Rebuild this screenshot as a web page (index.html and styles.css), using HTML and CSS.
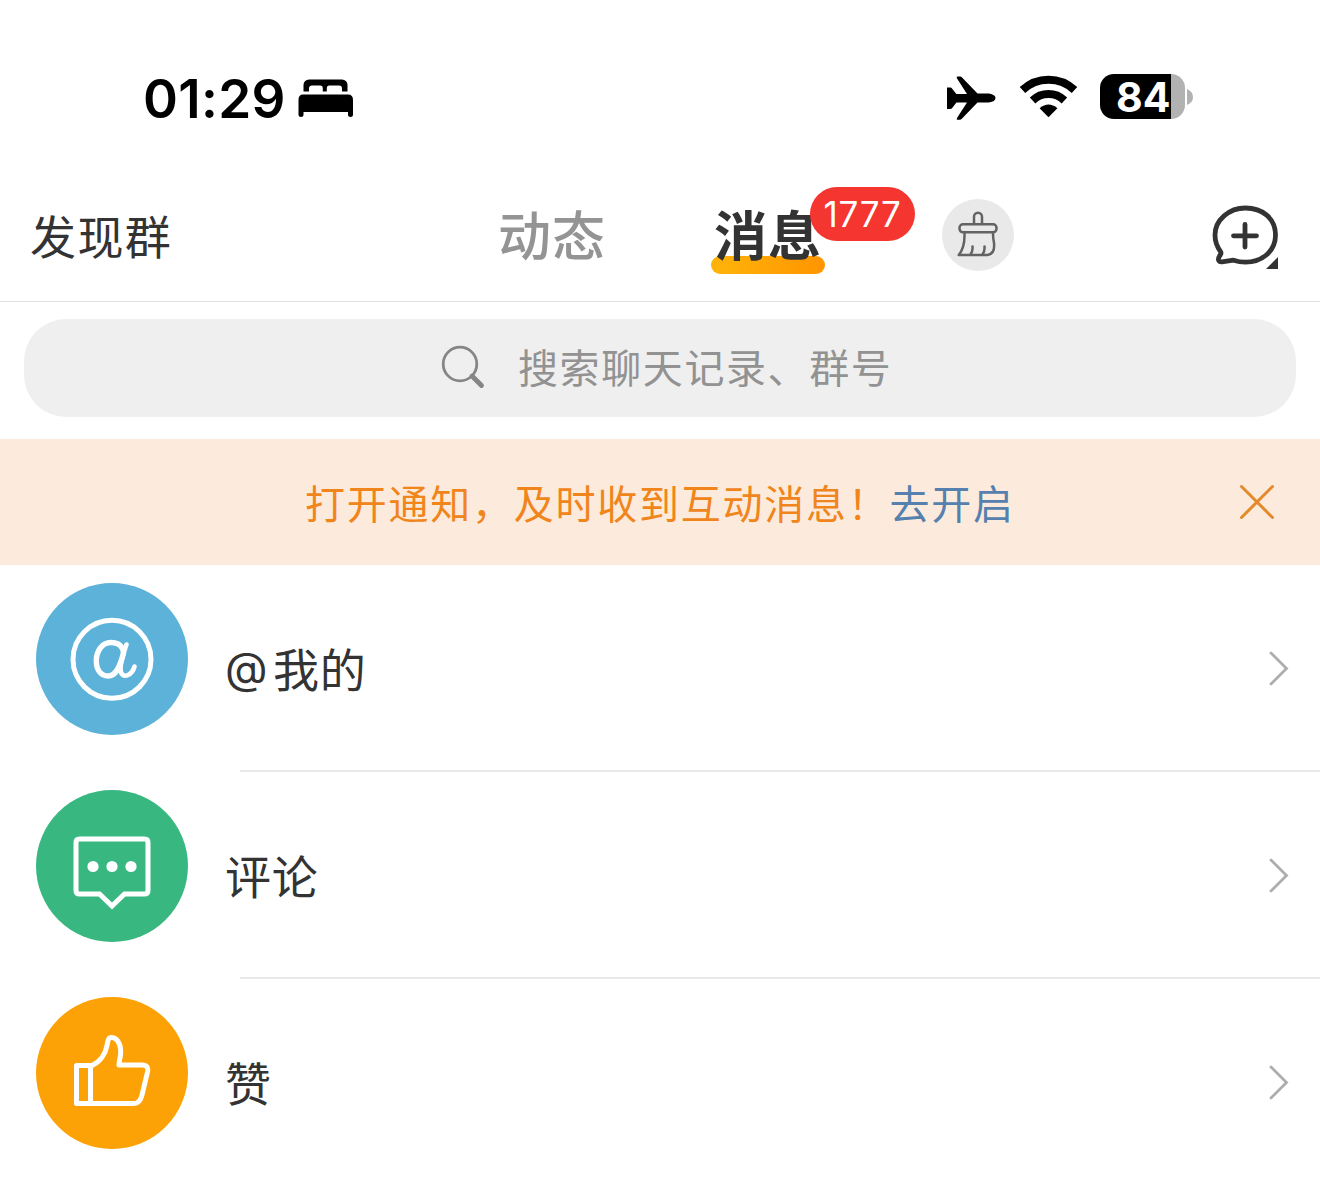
FILE: index.html
```html
<!DOCTYPE html>
<html lang="zh-CN">
<head>
<meta charset="utf-8">
<title>消息</title>
<link rel="stylesheet" href="styles.css">
</head>
<body>
<div class="screen">
  <div class="status">
    <div class="status-left">
      <span class="clock">01:29</span>
      <svg class="bed" width="56" height="40" viewBox="0 0 56 40">
        <path d="M5.500 12.500V6a5.500 5.500 0 0 1 5.500-5.500h33A5.500 5.500 0 0 1 49.500 6v6.500h-5.500V9.500q0-3-3-3H31q-2.200 0-2.200 2.500v3.500h-4V9q0-2.500-2.200-2.500H14q-3 0-3 3v3z"/>
        <path d="M5 15.500h45q5 0 5 5.500v15q0 2-2.500 2T50 36v-3H5.500v3q0 2-2.500 2T0.500 36V21q0-5.500 4.500-5.500z"/>
      </svg>
    </div>
    <div class="status-right">
      <svg class="plane" width="50" height="46" viewBox="0 0 50 46">
        <path d="M1 12.500h3.200q1.200 0 2 1.200l4.200 5.300H21L11.200 3.800Q10 1.500 11.500 1.500h2.600q1.200 0 2.200 1.200L31.500 18.500H43q6.500 1 6.500 4.500T43 27.500H31.500L16.300 43.300q-1.300 1.500-2.600 1.500h-2.400q-1.200 0 0-2.200L21 27.500h-10.600L6.200 33q-.8 1-2 1H1z"/>
      </svg>
      <svg class="wifi" width="60" height="46" viewBox="0 0 60 46">
        <g fill="none" stroke="#000" stroke-width="8">
          <path d="M3.500 16a38 38 0 0 1 52 0"/>
          <path d="M13.600 26.500a23 23 0 0 1 31.800 0"/>
        </g>
        <path d="M20.600 34.300q8.900-7.500 17.800 0L29.500 43.300z"/>
      </svg>
      <div class="battery">
        <div class="battery-body"><span>84</span></div>
        <svg width="6" height="16" viewBox="0 0 6 16"><path d="M0 0q6 2.500 6 8T0 16z" fill="#b2b2b2"/></svg>
      </div>
    </div>
  </div>

  <div class="nav">
    <span class="discover">发现群</span>
    <span class="tab">动态</span>
    <span class="tab active">消息<b class="badge">1777</b></span>
    <span class="clean">
      <svg width="72" height="72" viewBox="0 0 72 72" fill="none" stroke="#636363" stroke-width="2.500" stroke-linecap="round" stroke-linejoin="round">
        <path d="M32 25v-7.200a4 4 0 0 1 8 0V25"/>
        <rect x="17.500" y="25.300" width="37" height="8" rx="3.500"/>
        <path d="M22.500 34.500q.5 14-5.800 21.500h28.500q8-1 6.800-12-1-5-1-9.500"/>
        <path d="M28.500 55.500q2.500-3.500 2-8M40.500 55.500q2.500-3.500 2-8"/>
      </svg>
    </span>
    <svg class="compose" width="68" height="66" viewBox="0 0 68 66">
      <path d="M21.500 56.200Q27.500 58.200 33.500 58.200C49 58.200 63.500 48 63.500 31S50 4 33.500 4 3 16 3 31q0 9 5.500 16.500Q9.500 49 8.500 50.500 6 54 6.500 56t3.500 1.800z" fill="none" stroke="#333" stroke-width="4.800" stroke-linejoin="round"/>
      <path d="M33 20.500v22.500M21.500 31.800h23" stroke="#333" stroke-width="4.800" stroke-linecap="round"/>
      <path d="M66 53v12H54z" fill="#333"/>
    </svg>
  </div>

  <div class="search">
    <svg width="46" height="46" viewBox="0 0 46 46" fill="none" stroke="#858585">
      <circle cx="20" cy="20" r="16.800" stroke-width="2.800"/>
      <path d="M32 32l9.500 9.500" stroke-width="4.800" stroke-linecap="round"/>
    </svg>
    <span>搜索聊天记录、群号</span>
  </div>

  <div class="notice">
    <span class="notice-text">打开通知，及时收到互动消息！<a>去开启</a></span>
    <svg width="38" height="38" viewBox="0 0 38 38" stroke="#e38a2c" stroke-width="3" stroke-linecap="round"><path d="M3.500 3.500l31 31M34.500 3.500l-31 31"/></svg>
  </div>

  <div class="row">
    <svg class="icon" width="152" height="152" viewBox="0 0 152 152">
      <circle cx="76" cy="76" r="76" fill="#5cb2d9"/>
      <g fill="none" stroke="#fff" stroke-linecap="round" stroke-linejoin="round">
        <circle cx="76" cy="76.300" r="39" stroke-width="5"/>
        <path d="M90.500 61.500C88 69 84.500 78 84.500 86c0 5.500 3.500 8 7.500 6 4.500-2 5.500-5 6.500-8.500" stroke-width="4.600"/>
        <path d="M87.500 70C87 62 81 59.500 75 59.500 66 59.500 60.300 68 60.300 78c0 9 4.700 15 11.700 15C80 93 84 84 87.500 70z" stroke-width="5.400"/>
      </g>
    </svg>
    <div class="row-body"><span><i class="at">@</i>我的</span><svg class="chevron" width="22" height="36" viewBox="0 0 22 36"><path d="M3 3l15.500 15.500L3 34"/></svg></div>
  </div>
  <div class="row">
    <svg class="icon" width="152" height="152" viewBox="0 0 152 152">
      <circle cx="76" cy="76" r="76" fill="#38b880"/>
      <path d="M43.500 49h65q3.500 0 3.500 3.500v48q0 3.500-3.500 3.500H88.500L76 116 63.500 104h-20q-3.500 0-3.500-3.500v-48q0-3.500 3.500-3.500z" fill="none" stroke="#fff" stroke-width="5"/>
      <g fill="#fff"><circle cx="57" cy="76.500" r="5.600"/><circle cx="76" cy="76.500" r="5.600"/><circle cx="95" cy="76.500" r="5.600"/></g>
    </svg>
    <div class="row-body"><span>评论</span><svg class="chevron" width="22" height="36" viewBox="0 0 22 36"><path d="M3 3l15.500 15.500L3 34"/></svg></div>
  </div>
  <div class="row last">
    <svg class="icon" width="152" height="152" viewBox="0 0 152 152">
      <circle cx="76" cy="76" r="76" fill="#fda206"/>
      <path d="M54.500 68.500V106.500M40.500 68.500H56C64 65 69.500 57 71 48.500 72 42.500 72.500 40.500 75.500 40.500 82 40.500 85.500 49 84.500 58 84 62 83 64 83 68H106q7 0 5.500 7L106 98q-2 8.500-8 8.500H40.500z" fill="none" stroke="#fff" stroke-width="5" stroke-linejoin="round"/>
    </svg>
    <div class="row-body"><span>赞</span><svg class="chevron" width="22" height="36" viewBox="0 0 22 36"><path d="M3 3l15.500 15.500L3 34"/></svg></div>
  </div>
</div>
</body>
</html>
```
FILE: styles.css
```css
* { box-sizing: border-box; }
body {
  margin: 0;
  background: #fff;
  color: #333;
  font-family: "Noto Sans CJK SC", sans-serif;
}
svg { display: block; flex: none; }
.screen {
  width: 1320px;
  height: 1184px;
  overflow: hidden;
}
.status {
  height: 172px;
  padding: 74px 127px 0 143px;
  display: flex;
  justify-content: space-between;
  color: #000;
  font-family: Inter, sans-serif;
}
.status-left, .status-right { display: flex; }
.clock {
  width: 156px;
  font-size: 53px;
  line-height: 50px;
  font-weight: 600;
  letter-spacing: 0.300px;
}
.bed { margin: 5px 0 0 -1px; }
.plane { margin-top: 1px; }
.wifi { margin-left: 23px; }
.battery {
  margin-left: 21px;
  display: flex;
  align-items: center;
  gap: 2px;
  height: 45px;
}
.battery-body {
  width: 85px;
  height: 45px;
  border-radius: 14px;
  background: linear-gradient(90deg, #000 71px, #b2b2b2 71px);
  color: #fff;
  font-size: 41px;
  line-height: 46px;
  font-weight: 700;
  padding-left: 16px;
}
.nav {
  height: 130px;
  border-bottom: 1px solid #e2e2e2;
  display: flex;
  align-items: flex-start;
  padding-left: 30px;
}
.discover {
  width: 468px;
  padding-top: 29px;
  font-size: 46px;
  line-height: 66px;
  letter-spacing: 1.400px;
}
.tab {
  position: relative;
  width: 108px;
  margin-right: 108px;
  padding-top: 23px;
  font-size: 53px;
  line-height: 76px;
  font-weight: 500;
  letter-spacing: 1px;
  color: #949494;
  white-space: nowrap;
}
.tab.active {
  z-index: 0;
  margin-right: 120px;
  color: #333;
  font-weight: 700;
}
.tab.active::before {
  content: "";
  position: absolute;
  z-index: -1;
  left: -3px;
  top: 84px;
  width: 114px;
  height: 18px;
  border-radius: 9px;
  background: linear-gradient(90deg, #ffb40a, #ff9500);
}
.badge {
  position: absolute;
  left: 96px;
  top: 15px;
  width: 105px;
  height: 54px;
  border-radius: 27px;
  background: #f43530;
  color: #fff;
  font-family: Inter, sans-serif;
  font-size: 35px;
  line-height: 55px;
  font-weight: 400;
  letter-spacing: 0.700px;
  text-align: center;
}
.clean {
  margin-top: 27px;
  border-radius: 50%;
  background: #e9e9e9;
}
.compose { margin: 32px 0 0 198px; }
.search {
  margin: 17px 24px 22px;
  height: 98px;
  border-radius: 42px;
  background: #efefef;
  color: #929292;
  display: flex;
  align-items: center;
  padding: 0 0 2px 416px;
  font-size: 40px;
  letter-spacing: 1.600px;
}
.search span { margin: -2px 0 0 32px; }
.notice {
  height: 126px;
  background: #fcebdc;
  color: #f0851b;
  display: flex;
  align-items: center;
  justify-content: space-between;
  padding: 0 44px 0 305px;
  font-size: 40px;
  letter-spacing: 1.750px;
}
.notice a { color: #5680ad; }
.row {
  height: 207px;
  display: flex;
  align-items: flex-start;
  padding-left: 36px;
}
.icon { margin-top: 18px; }
.row-body {
  flex: 1;
  height: 207px;
  margin-left: 52px;
  border-bottom: 2px solid #e8e8e8;
  display: flex;
  align-items: center;
  justify-content: space-between;
  padding: 1px 30px 0 0;
  font-size: 46px;
  letter-spacing: 0.800px;
}
.row-body span { margin: -2px 0 0 -15px; }
.at {
  display: inline-block;
  width: 48px;
  font-family: Inter, sans-serif;
  font-size: 44px;
  font-style: normal;
  line-height: 1;
  vertical-align: 3px;
}
.last .row-body { border-bottom-color: transparent; }
.chevron path {
  fill: none;
  stroke: #adadad;
  stroke-width: 2.800;
  stroke-linecap: round;
}
```
